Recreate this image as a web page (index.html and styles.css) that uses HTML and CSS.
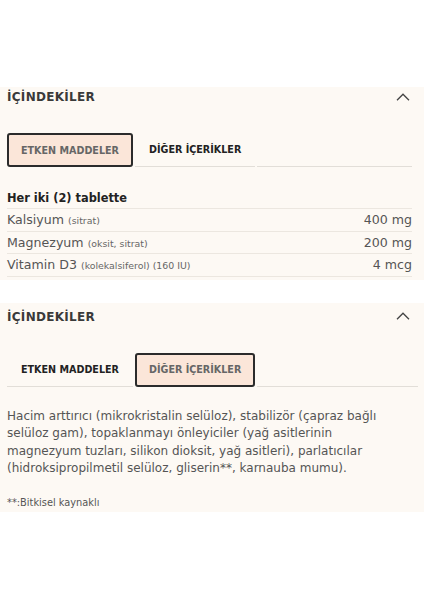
FILE: index.html
```html
<!DOCTYPE html>
<html lang="tr">
<head>
<meta charset="utf-8">
<link rel="stylesheet" href="styles.css">
</head>
<body>
<div class="page">
  <section class="panel panel-first">
    <div class="panel-head">
      <h2 class="panel-title">İÇİNDEKİLER</h2>
      <svg class="chevron" width="14" height="8" viewBox="0 0 14 8"><path d="M1 7.2 L7 1.2 L13 7.2" fill="none" stroke="#444" stroke-width="1.3"/></svg>
    </div>
    <div class="tabs">
      <div class="tab tab-active">ETKEN MADDELER</div>
      <div class="tab">DİĞER İÇERİKLER</div>
      <div class="tab-rest"></div>
    </div>
    <div class="table">
      <div class="row row-head">Her iki (2) tablette</div>
      <div class="row"><span>Kalsiyum <small>(sitrat)</small></span><span>400 mg</span></div>
      <div class="row"><span>Magnezyum <small>(oksit, sitrat)</small></span><span>200 mg</span></div>
      <div class="row"><span>Vitamin D3 <small>(kolekalsiferol) (160 IU)</small></span><span>4 mcg</span></div>
    </div>
  </section>
  <section class="panel panel-second">
    <div class="panel-head">
      <h2 class="panel-title">İÇİNDEKİLER</h2>
      <svg class="chevron" width="14" height="8" viewBox="0 0 14 8"><path d="M1 7.2 L7 1.2 L13 7.2" fill="none" stroke="#444" stroke-width="1.3"/></svg>
    </div>
    <div class="tabs tabs-wide">
      <div class="tab">ETKEN MADDELER</div>
      <div class="tab tab-active">DİĞER İÇERİKLER</div>
      <div class="tab-rest"></div>
    </div>
    <p class="desc">Hacim arttırıcı (mikrokristalin selüloz), stabilizör (çapraz bağlı selüloz gam), topaklanmayı önleyiciler (yağ asitlerinin magnezyum tuzları, silikon dioksit, yağ asitleri), parlatıcılar (hidroksipropilmetil selüloz, gliserin**, karnauba mumu).</p>
    <p class="note">**:Bitkisel kaynaklı</p>
  </section>
</div>
</body>
</html>
```
FILE: styles.css
```css
* { box-sizing: border-box; }
html, body { margin: 0; padding: 0; background: #fff; }
body { font-family: "DejaVu Sans", "Open Sans", sans-serif; color: #555; }
.page { padding-top: 87px; display: flex; flex-direction: column; gap: 23px; }
.panel { background: #fdf9f4; padding: 0 12px 3px 7px; }
.panel-first { padding-top: 1px; }
.panel-second { padding-top: 5px; padding-bottom: 0; height: 209px; }
.panel-head { display: flex; align-items: center; justify-content: space-between; height: 18px; }
.panel-title { margin: 0; font-size: 12px; font-weight: bold; letter-spacing: 0.3px; color: #3a3a3a; line-height: 18px; }
.chevron { margin-right: 2px; margin-top: -1px; }
.tabs { display: flex; gap: 2px; margin-top: 27px; height: 34px; }
.tab { font-size: 9.6px; font-weight: bold; color: #222; padding: 0 14px; display: flex; align-items: center; border-bottom: 1px solid #e2ded8; white-space: nowrap; }
.tab-active { background: #fbe6d9; color: #666; border: 2px solid #2b2b2b; border-radius: 3px; padding: 0 12px; }
.tab-rest { flex: 1; border-bottom: 1px solid #e2ded8; }
.tabs-wide { margin-right: -6px; }
.table { margin-top: 20px; }
.row { display: flex; justify-content: space-between; align-items: center; height: 22.6px; border-bottom: 1px solid #ece7e0; font-size: 12.6px; color: #555; }
.row-head { font-weight: bold; font-size: 11.4px; color: #222; height: 22px; }
.row small { font-size: 9.4px; color: #666; }
.desc { margin: 21px 0 0; max-width: 392px; font-size: 12px; line-height: 17.4px; color: #555; }
.note { margin: 20px 0 0; font-size: 9.8px; color: #555; }
```
